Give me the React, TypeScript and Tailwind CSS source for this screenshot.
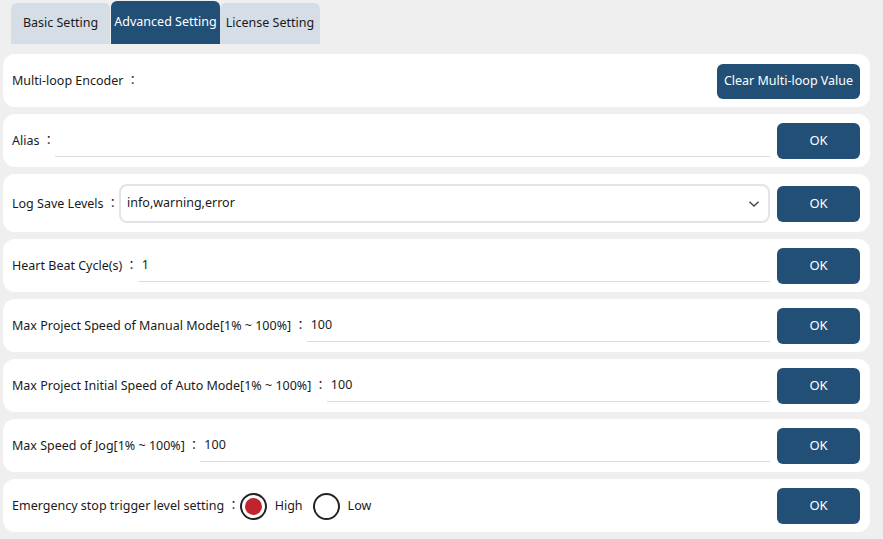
import React from 'react';

const rows = [
  { label: 'Alias', value: '' },
  { label: 'Heart Beat Cycle(s)', value: '1' },
  { label: 'Max Project Speed of Manual Mode[1% ~ 100%]', value: '100' },
  { label: 'Max Project Initial Speed of Auto Mode[1% ~ 100%]', value: '100' },
  { label: 'Max Speed of Jog[1% ~ 100%]', value: '100' },
];

function OkButton() {
  return (
    <button className="ml-[7px] h-[36px] w-[83px] shrink-0 rounded-[6px] bg-[#224f75] text-[13px] text-white">
      OK
    </button>
  );
}

function Card({ children, tall }: { children: React.ReactNode; tall?: boolean }) {
  return (
    <div
      className={`flex items-center rounded-[12px] bg-white pl-[9px] pr-[10px] pt-px ${tall ? 'h-[58px]' : 'h-[53px]'}`}
    >
      {children}
    </div>
  );
}

function Label({ text }: { text: string }) {
  return (
    <span className="shrink-0 whitespace-nowrap">
      {text}
      <span className="ml-[3px]" style={{ fontFamily: '"Noto Sans CJK TC", sans-serif' }}>
        ：
      </span>
    </span>
  );
}

export default function App() {
  return (
    <div
      className="h-[539px] w-[883px] overflow-hidden bg-[#efefef] text-[12.5px] text-[#1a1a1a]"
      style={{ fontFamily: '"Noto Sans", "Noto Sans CJK SC", sans-serif' }}
    >
      <div className="flex h-[44px] items-end px-[11px]">
        <div className="flex h-[41px] w-[99px] items-center justify-center rounded-t-[6px] bg-[#d5dde7]">
          Basic Setting
        </div>
        <div className="ml-px flex h-[43px] w-[109px] items-center justify-center rounded-t-[6px] bg-[#224f75] text-white">
          Advanced Setting
        </div>
        <div className="flex h-[41px] w-[100px] items-center justify-center rounded-t-[6px] bg-[#d5dde7]">
          License Setting
        </div>
      </div>

      <div className="mt-[10px] box-content flex w-[867px] flex-col gap-[7px] pl-[3px]">
        <Card>
          <Label text="Multi-loop Encoder" />
          <div className="flex-1" />
          <button className="h-[35px] w-[143px] rounded-[6px] bg-[#224f75] text-[12.5px] text-white">
            Clear Multi-loop Value
          </button>
        </Card>

        <Card>
          <Label text={rows[0].label} />
          <div className="flex h-[32px] flex-1 items-center border-b border-[#dcdcdc] pl-[3px]">
            {rows[0].value}
          </div>
          <OkButton />
        </Card>

        <Card tall>
          <Label text="Log Save Levels" />
          <div className="flex h-[39px] flex-1 items-center justify-between rounded-[8px] border-2 border-[#e4e4e4] pl-[6px] pr-[8px]">
            <span>info,warning,error</span>
            <svg width="12" height="8" viewBox="0 0 12 8" fill="none" stroke="#444" strokeWidth="1.4">
              <path d="M1.5 1.8 L6 6 L10.5 1.8" />
            </svg>
          </div>
          <OkButton />
        </Card>

        {rows.slice(1).map((r) => (
          <Card key={r.label}>
            <Label text={r.label} />
            <div className="flex h-[32px] flex-1 items-center border-b border-[#dcdcdc] pl-[4px]">
              {r.value}
            </div>
            <OkButton />
          </Card>
        ))}

        <Card>
          <Label text="Emergency stop trigger level setting" />
          <div className="flex items-center">
            <span className="flex h-[27px] w-[27px] items-center justify-center rounded-full border-[2.5px] border-[#222]">
              <span className="h-[17px] w-[17px] rounded-full bg-[#c1232f]" />
            </span>
            <span className="ml-[8px]">High</span>
            <span className="ml-[10px] h-[27px] w-[27px] rounded-full border-[2.5px] border-[#222]" />
            <span className="ml-[8px]">Low</span>
          </div>
          <div className="flex-1" />
          <OkButton />
        </Card>
      </div>
    </div>
  );
}
